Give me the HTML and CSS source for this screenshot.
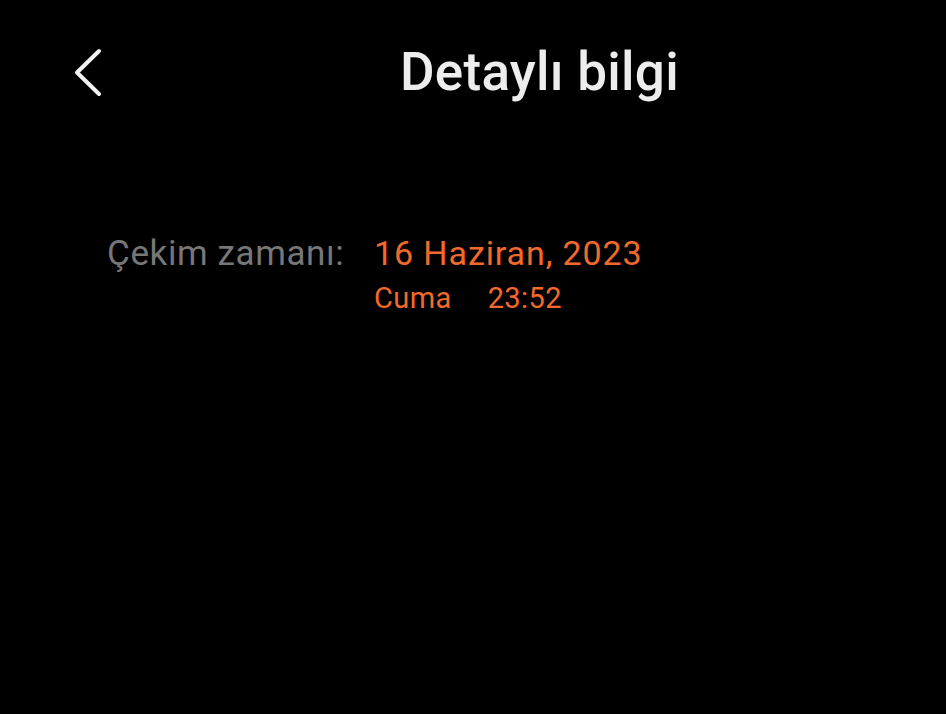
FILE: index.html
```html
<!DOCTYPE html>
<html lang="tr">
<head>
<meta charset="utf-8">
<link rel="stylesheet" href="styles.css">
</head>
<body>
<div class="screen">
  <header class="topbar">
    <button class="back" aria-label="Geri">
      <svg width="32" height="50" viewBox="0 0 32 50"><path d="M28 4 L6 25.5 L28 47" fill="none" stroke="#f2f2f2" stroke-width="4" stroke-linecap="round" stroke-linejoin="round"/></svg>
    </button>
    <h1 class="title">Detaylı bilgi</h1>
  </header>
  <section class="info">
    <div class="label">Çekim zamanı:</div>
    <div class="value">
      <div class="date">16 Haziran, 2023</div>
      <div class="sub"><span class="day">Cuma</span><span class="time">23:52</span></div>
    </div>
  </section>
</div>
</body>
</html>
```
FILE: styles.css
```css
html, body {
  margin: 0;
  padding: 0;
  background: #000;
}
.screen {
  width: 946px;
  height: 714px;
  background: #000;
  font-family: Roboto, "Noto Sans", sans-serif;
  overflow: hidden;
}
.topbar {
  display: flex;
  align-items: center;
  height: 144px;
  padding-left: 71px;
}
.back {
  background: none;
  border: 0;
  padding: 0;
  width: 32px;
  height: 50px;
  display: flex;
}
.title {
  margin: 0 0 0 297px;
  font-size: 53px;
  font-weight: 500;
  color: #ededed;
  letter-spacing: 0.25px;
}
.info {
  display: flex;
  align-items: baseline;
  padding-left: 107px;
  padding-top: 89px;
}
.label {
  font-size: 35px;
  color: #777777;
  letter-spacing: 0.6px;
  width: 267px;
}
.value {
  color: #f26a2b;
}
.date {
  font-size: 34px;
  letter-spacing: 0.9px;
}
.sub {
  font-size: 29px;
  margin-top: 8px;
  letter-spacing: 0.4px;
}
.time {
  margin-left: 36px;
}
```
